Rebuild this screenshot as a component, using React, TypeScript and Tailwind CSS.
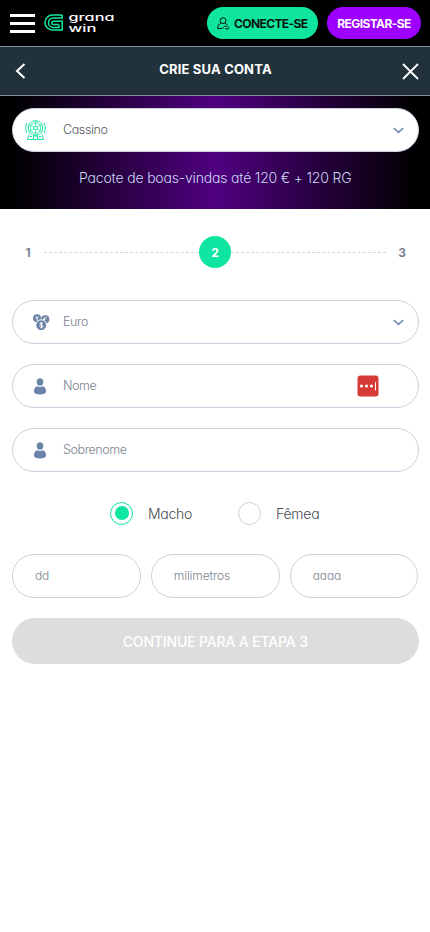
import type { ReactNode } from 'react';

function CasinoWheel() {
  return (
    <svg width="22" height="22" viewBox="0 0 22 22" fill="none" stroke="#19e6a5" strokeWidth="1">
      <circle cx="10.5" cy="9" r="7.3" />
      <circle cx="10.5" cy="9" r="5.3" strokeWidth=".8" />
      <circle cx="10.5" cy="9" r="1.8" />
      <path d="M10.5 2v5M10.5 11v5M3.8 5.5L9 8M12 10l5 2.7M17 5.5L12 8M9 10l-5 2.7" strokeWidth=".8" />
      <path d="M2 4C.3 7 .3 11 2 14M19 4c1.7 3 1.7 7 0 10M4 15.500L2.500 20.500H8L9 16M17 15.500L18.500 20.500H13L12 16M8.500 17h4v3.500h-4zM5 17.500h2M14 17.500h2" />
    </svg>
  );
}

function Coins() {
  return (
    <svg width="17" height="17" viewBox="0 0 17 17">
      <g fill="#6b83a6">
        <circle cx="4" cy="4.200" r="4" />
        <circle cx="12.200" cy="5.400" r="4.100" />
        <circle cx="8.200" cy="11.200" r="5.400" stroke="#fff" strokeWidth="1" />
      </g>
      <g fill="none" stroke="#fff" strokeWidth="1">
        <path d="M2.500 2.300l1.500 2 1.500-2M4 4.300v2.200M13.800 3.800c-2-1.200-3.600.8-2.800 2.400M10 5.300h2.500" />
        <path d="M10 9.600c-.9-1.200-3.300-.9-3.200.4.100 1.300 3.200.8 3.200 2.200 0 1.500-2.600 1.600-3.500.3M8.300 8v6.500" />
      </g>
    </svg>
  );
}

function Person() {
  return (
    <svg width="12" height="17" viewBox="0 0 12 17" fill="#6b83a6">
      <ellipse cx="6" cy="4" rx="3.300" ry="3.800" />
      <path d="M0 13.500C0 10.500 1.300 8.600 3 8.200c1.800 1 4.200 1 6 0 1.700.4 3 2.300 3 5.300 0 1.900-2.200 2.900-6 2.900s-6-1-6-2.900z" />
    </svg>
  );
}

function Chevron() {
  return (
    <svg className="mr-[14px]" width="11" height="7" viewBox="0 0 11 7" fill="none" stroke="#7188aa" strokeWidth="1.600">
      <path d="M.8 1l4.700 4.300L10.200 1" />
    </svg>
  );
}

function Logo() {
  return (
    <svg className="ml-[9px] overflow-visible" width="71" height="22" viewBox="0 0 71 22">
      <g fill="none" stroke="#0de99e" strokeWidth="1.500">
        <path d="M18.200 3H8.500a7.500 7.500 0 0 0 0 15H18.200V9.200H9.500a1.700 1.700 0 0 0 0 3.400h5" />
        <path d="M18.200 3v3H9.200a4.700 4.700 0 0 0 0 9.400h5.800v-2.800" />
      </g>
      <g fill="#fff" fontFamily="Inter, sans-serif" fontWeight="500" fontSize="10.500" style={{ fontFeatureSettings: '"cv11"' }}>
        <text x="24.500" y="8.700" textLength="46" lengthAdjust="spacingAndGlyphs">grana</text>
        <text x="24.500" y="19.600" textLength="28" lengthAdjust="spacingAndGlyphs">win</text>
      </g>
    </svg>
  );
}

function Field({ icon, children, end }: { icon: ReactNode; children: ReactNode; end?: ReactNode }) {
  return (
    <div className="flex h-11 w-full items-center rounded-full border border-[#cbd1e0] bg-white text-[12.500px] font-light tracking-[-0.400px]">
      <span className="flex w-[50px] shrink-0">{icon}</span>
      <span className="flex-1">{children}</span>
      {end}
    </div>
  );
}

export default function App() {
  return (
    <div className="h-[932px] w-[430px] overflow-hidden bg-white font-['Inter',sans-serif] text-[#7a8491] [font-feature-settings:'cv11']">
      <header className="flex h-[46px] items-center bg-black">
        <div className="ml-2.5 flex w-[25px] flex-col gap-[5px]">
          <i className="h-[3px] bg-white" />
          <i className="h-[3px] bg-white" />
          <i className="h-[3px] bg-white" />
        </div>
        <Logo />
        <button className="ml-[92px] flex h-8 w-[111px] items-center rounded-full bg-[#10e5a0] pl-[10px] text-[12px] font-bold tracking-[-0.600px] whitespace-nowrap text-[#06150f]">
          <svg className="mr-1 shrink-0" width="13" height="13" viewBox="0 0 13 13" fill="none" stroke="currentColor" strokeWidth="1">
            <circle cx="6" cy="3.600" r="2.900" />
            <path d="M4 6.300C1.800 7 .7 8.500.7 11.500H5M8 6.300c1 .3 1.700.8 2.200 1.500M6 11.500c0-3 5-3 6-1M12 11c-1 1.500-3 1.500-4 0" />
          </svg>
          <span className="pt-px">CONECTE-SE</span>
        </button>
        <button className="ml-[9px] h-8 w-[94px] rounded-full bg-[#9d00ff] pt-px text-[12px] font-bold tracking-[-0.600px] whitespace-nowrap text-white">REGISTAR-SE</button>
      </header>

      <div className="flex h-[50px] items-center justify-between border-y border-[#849096] bg-[#22323a] pr-[11px] pl-[15px] text-white">
        <svg width="11" height="16" viewBox="0 0 11 16" fill="none" stroke="currentColor" strokeWidth="2"><path d="M9.500 1L2 8l7.500 7" /></svg>
        <h1 className="ml-[3px] pb-0.5 text-[13px] font-bold tracking-[0.180px]">CRIE SUA CONTA</h1>
        <svg width="17" height="17" viewBox="0 0 17 17" fill="none" stroke="currentColor" strokeWidth="1.800"><path d="M1 1l15 15M16 1L1 16" /></svg>
      </div>

      <section className="h-[113px] bg-[linear-gradient(90deg,#000_3%,#500080_50%,#000_97%)] pt-3 pr-[11.500px] pl-3 text-center">
        <div className="text-left text-[#555b63]">
          <Field icon={<span className="ml-3"><CasinoWheel /></span>} end={<Chevron />}>Cassino</Field>
        </div>
        <p className="mt-4 text-[14px] leading-5 font-light tracking-[-0.180px] text-[#cbd9f5]">Pacote de boas-vindas até 120 € + 120 RG</p>
      </section>

      <main className="pt-[27px] pr-[11.500px] pl-3">
        <div className="flex h-8 items-center text-[12px] font-bold">
          <span className="w-8 pt-0.5 text-center">1</span>
          <i className="w-[155px] border-t border-dashed border-[#d3d6d9]" />
          <span className="grid size-8 place-items-center rounded-full bg-[#0de5a0] pt-px text-white">2</span>
          <i className="w-[155px] border-t border-dashed border-[#d3d6d9]" />
          <span className="w-8 pt-0.5 text-center">3</span>
        </div>

        <div className="mt-8 flex flex-col gap-5">
          <Field icon={<span className="ml-5"><Coins /></span>} end={<Chevron />}>Euro</Field>
          <Field
            icon={<span className="ml-[21px]"><Person /></span>}
            end={
              <svg className="mr-[38.500px]" width="22" height="22" viewBox="0 0 22 22">
                <rect x=".5" y=".5" width="21" height="21" rx="3" fill="#d73b38" />
                <g fill="#fff">
                  <circle cx="4.500" cy="11" r="1.600" /><circle cx="9.500" cy="11" r="1.600" /><circle cx="14.500" cy="11" r="1.600" />
                  <rect x="18" y="7" width="1" height="8.500" />
                </g>
              </svg>
            }
          >Nome</Field>
          <Field icon={<span className="ml-[21px]"><Person /></span>}>Sobrenome</Field>
        </div>

        <div className="mt-[30px] flex h-[22px] items-center text-[14px] font-light tracking-[-0.250px] text-[#454b52]">
          <span className="ml-[98px] grid size-[23px] place-items-center rounded-full border-[1.500px] border-[#0de5a0]"><i className="size-[14px] rounded-full bg-[#0de5a0]" /></span>
          <span className="ml-[15px] w-[90px]">Macho</span>
          <span className="size-[23px] rounded-full border border-[#cbd1de]" />
          <span className="ml-[15px]">Fêmea</span>
        </div>

        <div className="mt-[30px] grid grid-cols-3 gap-2.5 text-[12px] font-light tracking-[-0.100px]">
          <div className="flex h-11 items-center rounded-full border border-[#cbd1de] pl-[22px]">dd</div>
          <div className="flex h-11 items-center rounded-full border border-[#cbd1de] pl-[22px]">milimetros</div>
          <div className="flex h-11 items-center rounded-full border border-[#cbd1de] pl-[22px]">aaaa</div>
        </div>
        <button className="mt-5 h-[46px] w-full rounded-full bg-[#ddd] text-[14px] font-medium tracking-[-0.150px] text-white">CONTINUE PARA A ETAPA 3</button>
      </main>
    </div>
  );
}
